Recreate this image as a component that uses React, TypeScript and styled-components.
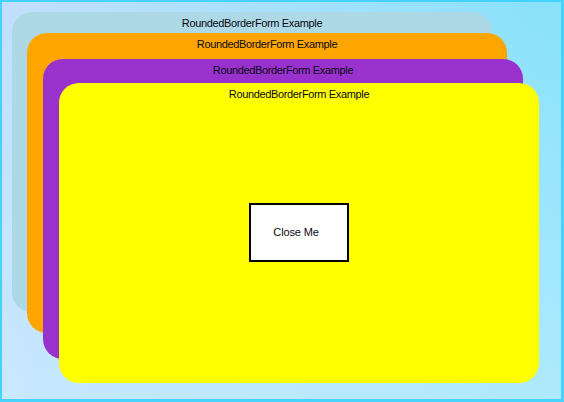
import styled, { createGlobalStyle } from "styled-components";

const GlobalStyle = createGlobalStyle`
  html, body {
    margin: 0;
    padding: 0;
  }
  body {
    font-family: "Liberation Sans", Arial, sans-serif;
  }
`;

const Desktop = styled.div`
  position: relative;
  width: 564px;
  height: 402px;
  box-sizing: border-box;
  border-style: solid;
  border-color: #45d3fb;
  border-width: 2px 3px 3px 2px;
  background:
    linear-gradient(to bottom, rgba(205, 240, 255, 0) 0%, rgba(205, 240, 255, 0.55) 100%),
    linear-gradient(to right, #c2dffd 0%, #a9e0fc 45%, #88e2fb 100%);
  overflow: hidden;
`;

const Form = styled.div<{ $x: number; $y: number; $bg: string }>`
  position: absolute;
  left: ${(p) => p.$x - 2}px;
  top: ${(p) => p.$y - 2}px;
  width: 480px;
  height: 300px;
  border-radius: 20px;
  background: ${(p) => p.$bg};
  display: flex;
  flex-direction: column;
  align-items: center;
`;

const Title = styled.div`
  padding-top: 5px;
  font-size: 11px;
  line-height: 13px;
  letter-spacing: -0.35px;
  color: #0a0a14;
  white-space: nowrap;
`;

const Body = styled.div`
  flex: 1;
  display: flex;
  align-items: center;
  justify-content: center;
  margin-top: -19px;
`;

const CloseButton = styled.button`
  width: 100px;
  height: 59px;
  box-sizing: border-box;
  border: 2px solid #000;
  border-radius: 0;
  background: #fff;
  font-family: "Liberation Sans", Arial, sans-serif;
  font-size: 11px;
  letter-spacing: -0.15px;
  color: #0a0a14;
  padding: 0 6px 2px 0;
  cursor: pointer;
`;

const forms = [
  { x: 12, y: 12, bg: "#add8e6" },
  { x: 27, y: 33, bg: "#ffa500" },
  { x: 43, y: 59, bg: "#9932cc" },
  { x: 59, y: 83, bg: "#ffff00" },
];

export default function App() {
  return (
    <>
      <GlobalStyle />
      <Desktop>
        {forms.map((f, i) => (
          <Form key={i} $x={f.x} $y={f.y} $bg={f.bg}>
            <Title>RoundedBorderForm Example</Title>
            {i === forms.length - 1 && (
              <Body>
                <CloseButton>Close Me</CloseButton>
              </Body>
            )}
          </Form>
        ))}
      </Desktop>
    </>
  );
}
